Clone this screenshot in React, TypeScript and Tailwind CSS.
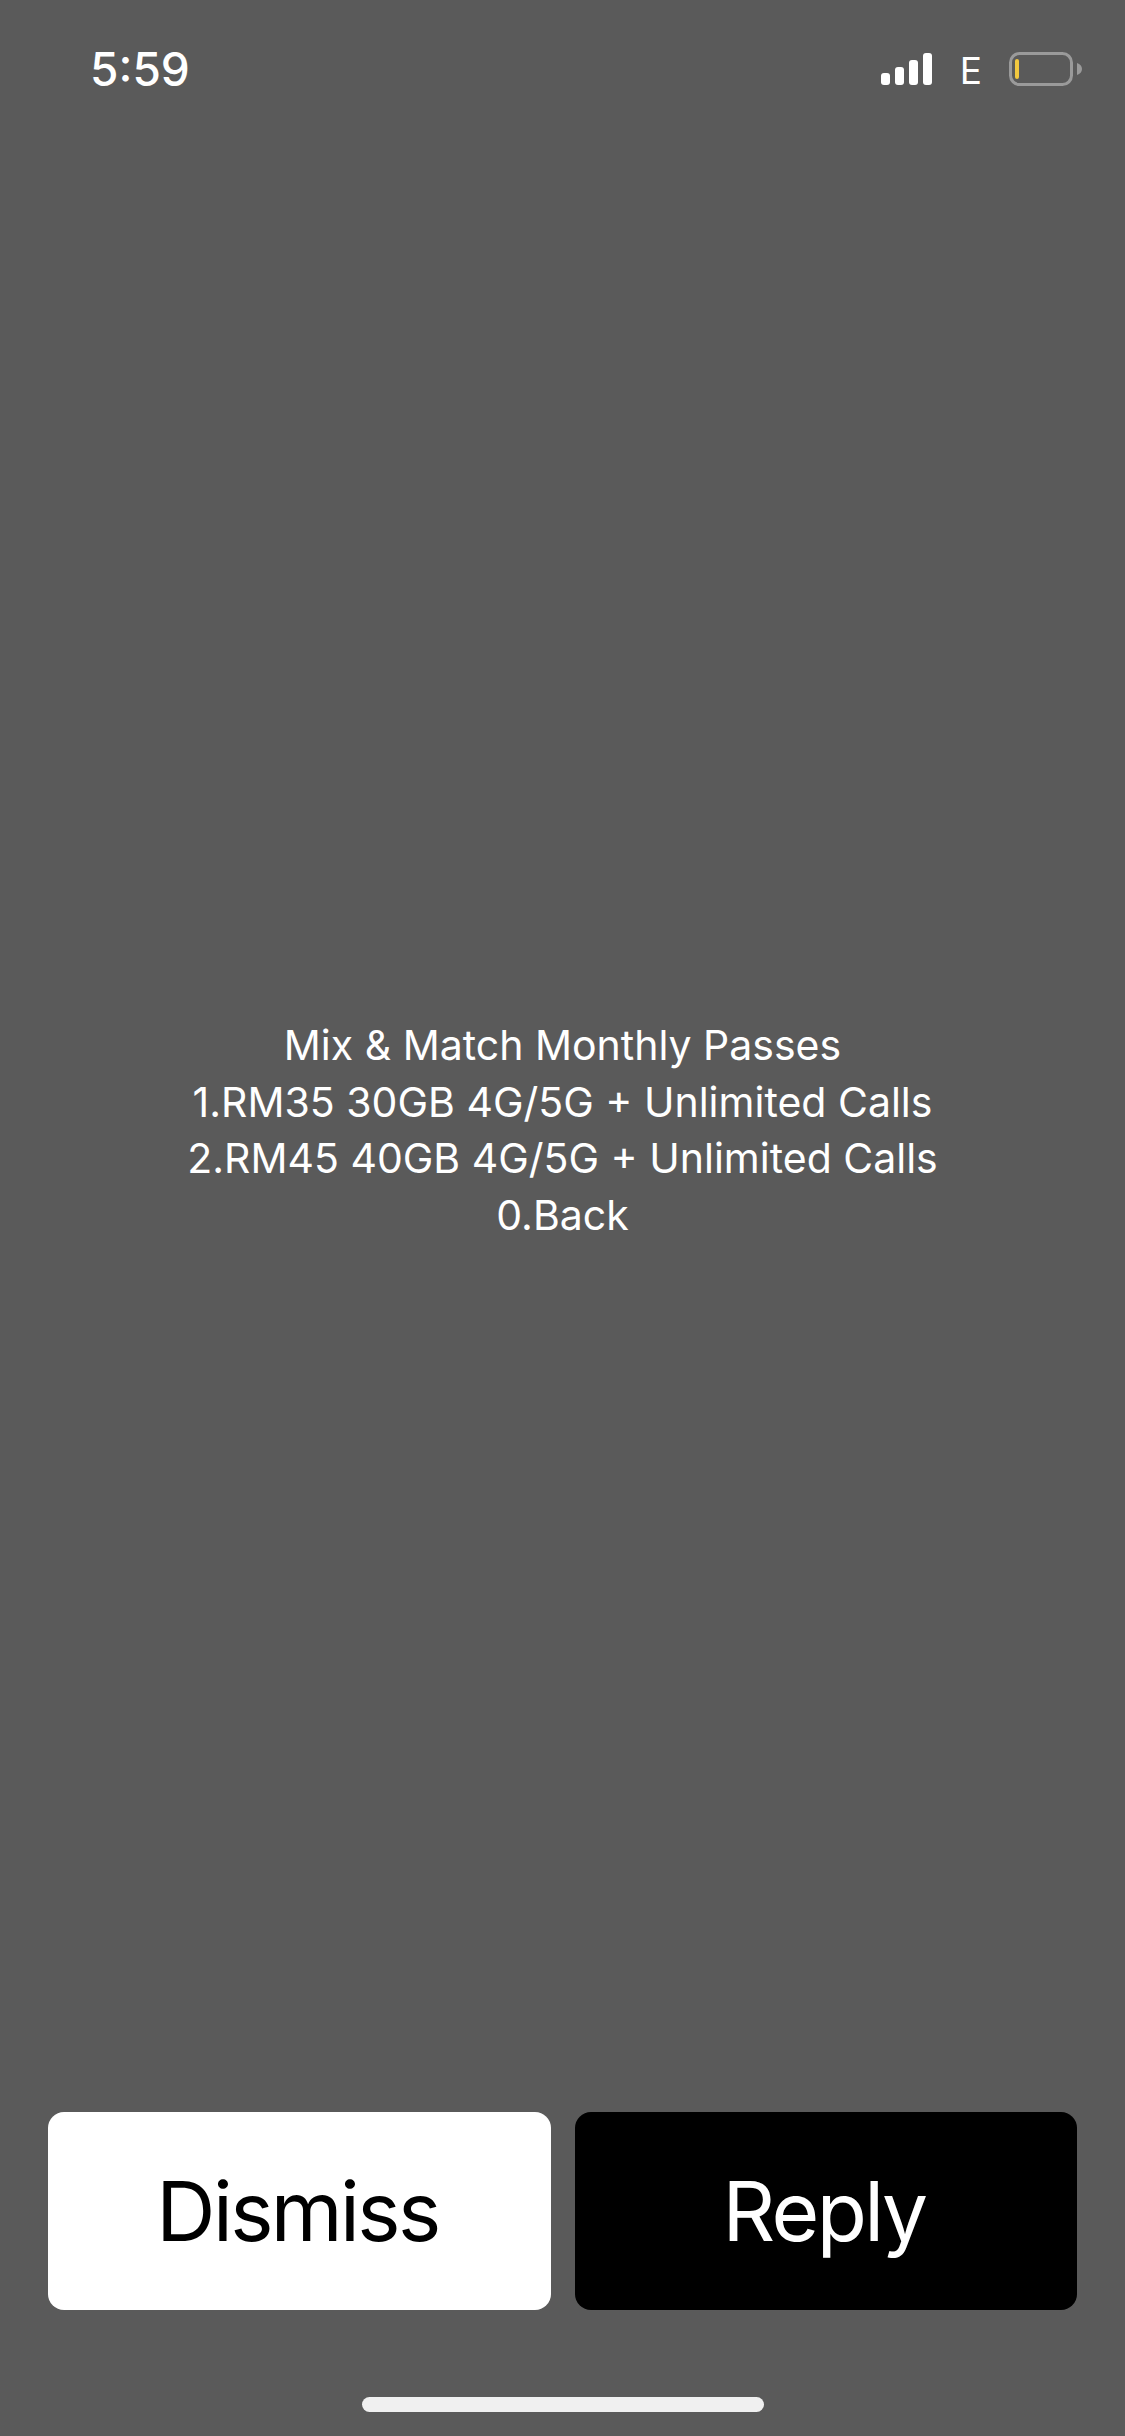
export default function App() {
  return (
    <div className="w-[1125px] h-[2436px] bg-[#5a5a5a] flex flex-col font-[Inter,sans-serif] overflow-hidden">
      {/* Status bar */}
      <div className="h-[140px] pl-[90px] pr-[42px] pt-[45px] flex justify-between items-start text-white">
        <span className="text-[46px] leading-[48px] font-medium">5:59</span>
        <div className="flex items-start">
          <svg width="52" height="33" viewBox="0 0 52 33" className="mt-[8px]" fill="#fff">
            <rect x="0" y="20" width="9" height="12" rx="3" />
            <rect x="14" y="14" width="9" height="18" rx="3" />
            <rect x="28" y="7" width="9" height="25" rx="3" />
            <rect x="42" y="0" width="9" height="32" rx="3" />
          </svg>
          <span className="ml-[27px] mt-[4px] text-[37px] leading-[44px]">E</span>
          <svg width="74" height="34" viewBox="0 0 74 34" className="ml-[27px] mt-[7px]">
            <rect x="1.5" y="1.5" width="61" height="31" rx="9" fill="none" stroke="#9a9a9a" strokeWidth="3" />
            <rect x="6" y="7" width="4" height="20" rx="2" fill="#f2c83f" />
            <path d="M68 11c3 1 5 3 5 6s-2 5-5 6z" fill="#9a9a9a" />
          </svg>
        </div>
      </div>

      {/* Message */}
      <div className="pt-[877px] text-center text-white text-[41px] leading-[56.7px]">
        <p>Mix &amp; Match Monthly Passes</p>
        <p>1.RM35 30GB 4G/5G + Unlimited Calls</p>
        <p>2.RM45 40GB 4G/5G + Unlimited Calls</p>
        <p>0.Back</p>
      </div>

      {/* Actions */}
      <div className="mt-auto px-[48px] flex gap-[24px]">
        <button className="w-[503px] h-[198px] pr-[4px] rounded-[16px] bg-white text-black text-[82px] tracking-[-2.6px]">Dismiss</button>
        <button className="w-[502px] h-[198px] pr-[4px] rounded-[16px] bg-black text-white text-[82px] tracking-[-2.6px]">Reply</button>
      </div>

      {/* Home indicator */}
      <div className="mt-[87px] mb-[24px] mx-auto w-[402px] h-[15px] rounded-full bg-[#f0f0f0]" />
    </div>
  );
}
